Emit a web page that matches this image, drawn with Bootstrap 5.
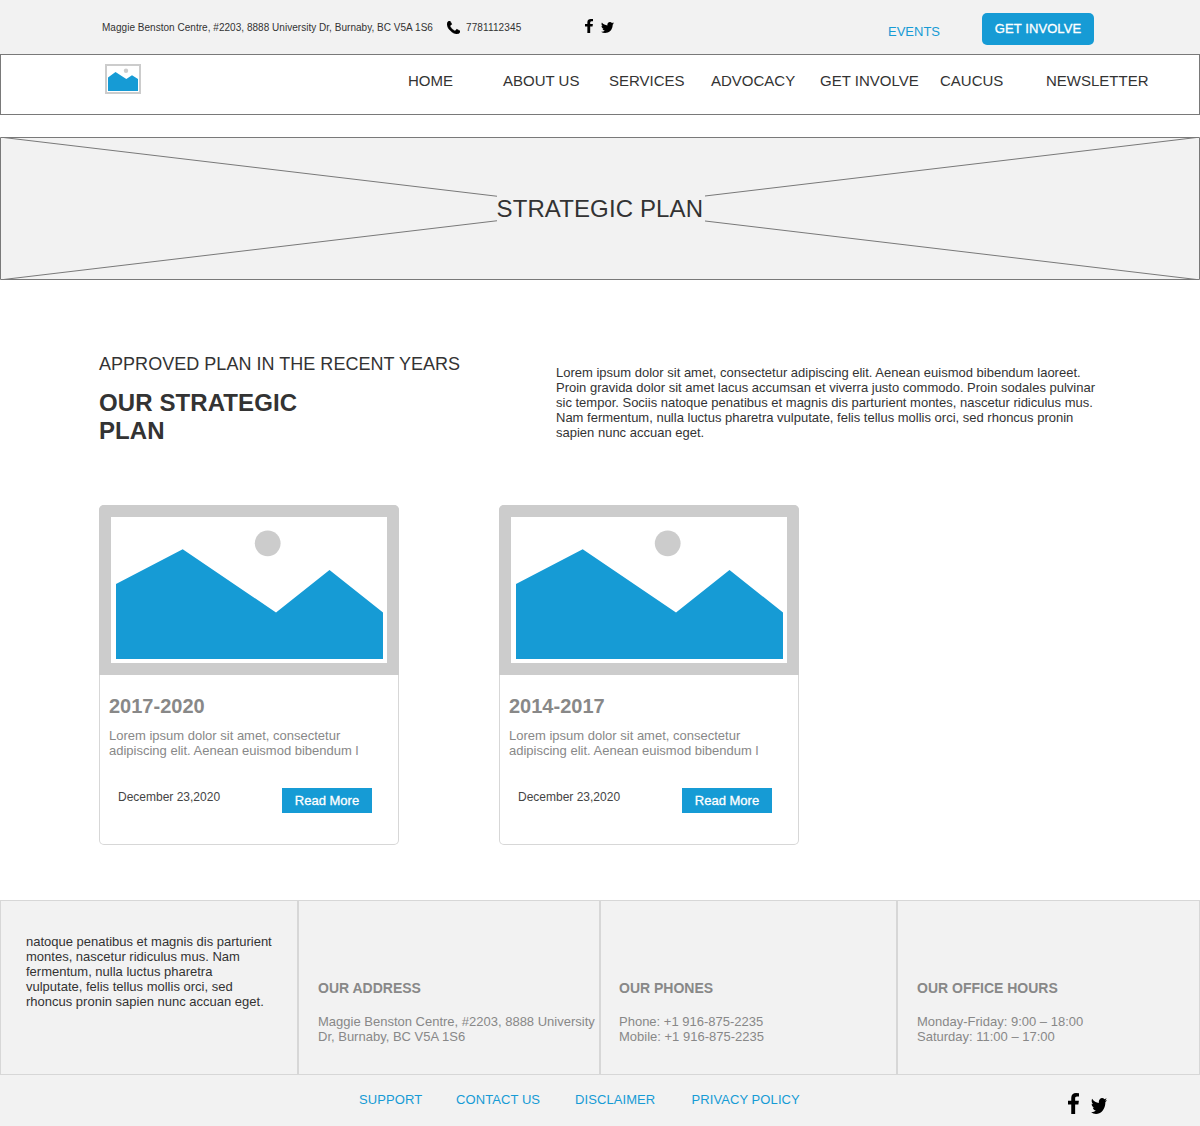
<!DOCTYPE html>
<html lang="en">
<head>
<meta charset="utf-8">
<meta name="viewport" content="width=device-width, initial-scale=1">
<title>Strategic Plan</title>
<link rel="stylesheet" href="https://cdn.jsdelivr.net/npm/bootstrap@5.3.0/dist/css/bootstrap.min.css">
<style>
  body { font-family: "Liberation Sans", Arial, sans-serif; font-size: 13px; line-height: 15px; color: #333; background: #fff; }
  a { color: #169bd5; text-decoration: none; }
  svg { display: block; flex: none; }
  .brand-fill { background: #169bd5; color: #fff; -webkit-text-stroke: .3px #fff; }
  .top-strip { height: 54px; background: #f2f2f2; padding-left: 102px; }
  .tiny { font-size: 10px; line-height: 12px; margin-top: 22px; white-space: nowrap; letter-spacing: .03px; }
  .addr-line { width: 345px; }
  .phone-line { width: 119px; margin-left: 6px; letter-spacing: .12px; }
  .phone-icon { margin-top: 21px; }
  .events-link { margin: 24px 42px 0 274px; width: 52px; }
  .cta { width: 112px; height: 32px; margin-top: 13px; border-radius: 5px; --bs-btn-border-width: 0; }
  .cta, .cta:hover, .more, .more:hover { background: #169bd5; color: #fff; font-size: 13px; line-height: 15px; padding: 0; border: 0; }
  .cta { letter-spacing: .08px; padding-bottom: 1px; }
  .main-nav { height: 61px; border: 1px solid #797979; padding: 9px 0 0 104px; }
  .menu-grid { display: grid; grid-template-columns: 95px 106px 102px 109px 120px 106px 110px; margin: 8px 0 0 267px; font-size: 15px; line-height: 17px; white-space: nowrap; }
  .menu-grid a { color: #333; }
  .hero { display: grid; height: 143px; margin-top: 22px; background: #f2f2f2; }
  .hero > * { grid-area: 1 / 1; }
  .hero h1 { font-size: 24px; line-height: 28px; margin: 0 0 0 2px; width: 208px; height: 28px; align-self: center; justify-self: center; background: #f2f2f2; white-space: nowrap; letter-spacing: .12px; text-indent: -.5px; position: relative; }
  .intro { padding: 73px 0 0 99px; height: 225px; }
  .intro-title { width: 457px; }
  .intro-title p { font-size: 18px; line-height: 21px; padding-top: 1px; letter-spacing: .03px; }
  .intro-title h2 { font-size: 24px; line-height: 28px; font-weight: 700; width: 220px; margin: 14px 0 0; letter-spacing: .1px; }
  .intro-text { width: 545px; margin-top: 12px; white-space: nowrap; }
  .plan-list { padding-left: 99px; gap: 100px; height: 395px; }
  .plan { width: 300px; height: 340px; border: 0; border-radius: 5px; box-shadow: inset 0 0 0 1px #d7d7d7; background: transparent; color: #888; }
  .plan h3 { font-size: 20px; line-height: 23px; font-weight: 700; margin: 20px 0 10px 10px; }
  .plan p { margin: 0 0 0 10px; width: 260px; }
  .plan-foot { margin: 30px 27px 0 19px; }
  .plan-foot span { font-size: 12px; line-height: 14px; margin-top: 2px; color: #444; }
  .more { width: 90px; height: 25px; border-radius: 0; }
  .foot-grid { display: grid; grid-template-columns: 298px 302px 297px 303px; height: 175px; background: #f2f2f2; }
  .foot-cell { border: 1px solid #d7d7d7; color: #888; padding: 79px 0 0 19px; white-space: nowrap; }
  .foot-cell:nth-child(3) { padding-left: 18px; }
  .foot-cell h4 { font-size: 14px; line-height: 16px; font-weight: 700; margin: 0 0 18px; }
  .foot-cell:first-child { color: #333; padding: 33px 0 0 25px; }
  .foot-links { height: 51px; background: #f2f2f2; padding-left: 359px; }
  .link-grid { display: grid; grid-template-columns: 97px 119px 116.5px 376.5px; margin-top: 17px; letter-spacing: .08px; }
</style>
</head>
<body>
<svg width="0" height="0" class="position-absolute">
  <symbol id="fb" viewBox="479 0 864 1664" preserveAspectRatio="none"><path d="M1343 12v264h-157q-86 0-116 36t-30 108v189h293l-39 296h-254v759h-306v-759h-255v-296h255v-218q0-186 104-288.500t277-102.500q147 0 228 12z"/></symbol>
  <symbol id="tw" viewBox="108 256 1576 1280" preserveAspectRatio="none"><path d="M1684 408q-67 98-162 167 1 14 1 42 0 130-38 259.500t-115.500 248.500-184.500 210.500-258 146-323 54.500q-271 0-496-145 35 4 78 4 225 0 401-138-105-2-188-64.500t-114-159.500q33 5 61 5 43 0 85-11-112-23-185.500-111.500t-73.500-205.500v-4q68 38 146 41-66-44-105-115t-39-154q0-88 44-163 121 149 294.500 238.500t371.500 99.500q-8-38-8-74 0-134 94.500-228.500t228.500-94.500q140 0 236 102 109-21 205-78-37 115-142 178 93-10 186-50z"/></symbol>
  <symbol id="tel" viewBox="192 128 1408 1408"><path stroke="#000" stroke-width="60" d="M1600 1240q0 27-10 70.500t-21 68.500q-21 50-122 106-94 51-186 51-27 0-53-3.500t-57.500-12.500-47-14.500-55.500-20.500-49-18q-98-35-175-83-127-79-264-216t-216-264q-48-77-83-175-3-9-18-49t-20.500-55.500-14.500-47-12.500-57.500-3.500-53q0-92 51-186 56-101 106-122 25-11 68.500-21t70.500-10q14 0 21 3 18 6 53 76 11 19 30 54t35 63.500 31 53.500q3 4 17.500 25t21.500 35.500 7 28.500q0 20-28.500 50t-62 55-62 53-28.500 46q0 9 5 22.500t8.500 20.500 14 24 11.500 19q76 137 174 235t235 174q2 1 19 11.500t24 14 20.500 8.500 22.500 5q18 0 46-28.500t53-62 55-62 50-28.500q14 0 28.500 7t35.500 21.500 25 17.500q25 15 53.500 31t63.500 35 54 30q70 35 76 53 3 7 3 21z"/></symbol>
  <symbol id="picture" viewBox="0 0 300 170"><path d="M0 170V5a5 5 0 0 1 5-5h290a5 5 0 0 1 5 5v165z" fill="#ccc"/><path d="M12 12h276v146H12z" fill="#fff"/><circle cx="168.700" cy="38.300" r="12.900" fill="#ccc"/><path d="M17 79 83.700 44.200 177 107.500 230.500 65 284 107.500V154H17z" fill="#169bd5"/></symbol>
</svg>

<header>
  <div class="top-strip d-flex align-items-start">
    <div class="tiny addr-line">Maggie Benston Centre, #2203, 8888 University Dr, Burnaby, BC V5A 1S6</div>
    <svg class="phone-icon" width="13" height="13"><use href="#tel"/></svg>
    <div class="tiny phone-line">7781112345</div>
    <div class="d-flex align-items-end" style="height:33px">
      <svg width="8" height="14"><use href="#fb"/></svg>
      <svg width="13" height="11" style="margin-left:8px"><use href="#tw"/></svg>
    </div>
    <a href="#" class="events-link">EVENTS</a>
    <a href="#" class="btn cta brand-fill d-flex align-items-center justify-content-center">GET INVOLVE</a>
  </div>
  <nav class="main-nav d-flex align-items-start">
    <a href="#"><svg width="36" height="30" viewBox="0 0 36 30"><path d="M0 0h36v30H0z" fill="#ccc"/><path d="M2 2h32v26H2z" fill="#fff"/><circle cx="21" cy="6.700" r="2.200" fill="#ccc"/><path d="M3 13.500 10.500 8 21.300 15 27 11.300 33 15V27H3z" fill="#169bd5"/></svg></a>
    <div class="menu-grid">
      <a href="#">HOME</a><a href="#">ABOUT US</a><a href="#">SERVICES</a><a href="#">ADVOCACY</a><a href="#">GET INVOLVE</a><a href="#">CAUCUS</a><a href="#">NEWSLETTER</a>
    </div>
  </nav>
</header>

<main>
  <section class="hero">
    <svg width="1200" height="143" fill="none" stroke="#797979"><path d="M.5.5h1199v142H.5z"/><path d="M3.500.5 1196.500 142.500M3.500 142.500 1196.500 .5"/></svg>
    <h1>STRATEGIC PLAN</h1>
  </section>

  <section class="intro d-flex align-items-start">
    <div class="intro-title">
      <p class="m-0">APPROVED PLAN IN THE RECENT YEARS</p>
      <h2>OUR STRATEGIC PLAN</h2>
    </div>
    <div class="intro-text">Lorem ipsum dolor sit amet, consectetur adipiscing elit. Aenean euismod bibendum laoreet.<br>Proin gravida dolor sit amet lacus accumsan et viverra justo commodo. Proin sodales pulvinar<br>sic tempor. Sociis natoque penatibus et magnis dis parturient montes, nascetur ridiculus mus.<br>Nam fermentum, nulla luctus pharetra vulputate, felis tellus mollis orci, sed rhoncus pronin<br>sapien nunc accuan eget.</div>
  </section>

  <section class="plan-list d-flex align-items-start">
    <article class="card plan">
      <svg width="300" height="170"><use href="#picture"/></svg>
      <h3>2017-2020</h3>
      <p>Lorem ipsum dolor sit amet, consectetur adipiscing elit. Aenean euismod bibendum l</p>
      <div class="plan-foot d-flex justify-content-between align-items-start">
        <span>December 23,2020</span>
        <a href="#" class="btn more brand-fill d-flex align-items-center justify-content-center">Read More</a>
      </div>
    </article>
    <article class="card plan">
      <svg width="300" height="170"><use href="#picture"/></svg>
      <h3>2014-2017</h3>
      <p>Lorem ipsum dolor sit amet, consectetur adipiscing elit. Aenean euismod bibendum l</p>
      <div class="plan-foot d-flex justify-content-between align-items-start">
        <span>December 23,2020</span>
        <a href="#" class="btn more brand-fill d-flex align-items-center justify-content-center">Read More</a>
      </div>
    </article>
  </section>
</main>

<footer>
  <div class="foot-grid">
    <div class="foot-cell">natoque penatibus et magnis dis parturient<br>montes, nascetur ridiculus mus. Nam<br>fermentum, nulla luctus pharetra<br>vulputate, felis tellus mollis orci, sed<br>rhoncus pronin sapien nunc accuan eget.</div>
    <div class="foot-cell"><h4>OUR ADDRESS</h4>Maggie Benston Centre, #2203, 8888 University<br>Dr, Burnaby, BC V5A 1S6</div>
    <div class="foot-cell"><h4>OUR PHONES</h4>Phone: +1 916-875-2235<br>Mobile: +1 916-875-2235</div>
    <div class="foot-cell"><h4>OUR OFFICE HOURS</h4>Monday-Friday: 9:00 – 18:00<br>Saturday: 11:00 – 17:00</div>
  </div>
  <div class="foot-links d-flex align-items-start">
    <div class="link-grid"><a href="#">SUPPORT</a><a href="#">CONTACT US</a><a href="#">DISCLAIMER</a><a href="#">PRIVACY POLICY</a></div>
    <div class="d-flex align-items-end" style="height:39px">
      <svg width="11" height="21"><use href="#fb"/></svg>
      <svg width="16" height="16" style="margin-left:12px"><use href="#tw"/></svg>
    </div>
  </div>
</footer>
<script src="https://cdn.jsdelivr.net/npm/bootstrap@5.3.0/dist/js/bootstrap.bundle.min.js"></script>
</body>
</html>
